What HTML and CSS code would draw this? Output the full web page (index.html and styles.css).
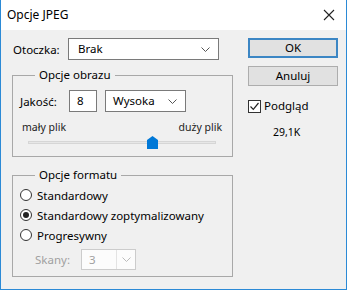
FILE: index.html
```html
<!DOCTYPE html>
<html lang="pl">
<head>
    <meta charset="UTF-8">
    <title>Opcje JPEG</title>
    <link rel="stylesheet" href="styles.css">
</head>
<body>
    <div class="window">
        <div class="titlebar">
            <span class="title">Opcje JPEG</span>
            <svg class="close" width="12" height="12" viewBox="0 0 12 12">
                <path d="M1 1 L11 11 M11 1 L1 11" stroke="#222" stroke-width="1.1" fill="none"/>
            </svg>
        </div>

        <div class="content">
            <div class="main">
                <div class="matte-row">
                    <span class="matte-label">Otoczka:</span>
                    <div class="select select-matte">
                        <span>Brak</span>
                        <svg class="chevron" width="9" height="5" viewBox="0 0 9 5"><path d="M0.5 0.5 L4.5 4.5 L8.5 0.5" stroke="#555" fill="none"/></svg>
                    </div>
                </div>

                <fieldset class="group group-image">
                    <legend>Opcje obrazu</legend>
                    <div class="quality-row">
                        <span class="quality-label">Jakość:</span>
                        <div class="field">8</div>
                        <div class="select select-quality">
                            <span>Wysoka</span>
                            <svg class="chevron" width="9" height="5" viewBox="0 0 9 5"><path d="M0.5 0.5 L4.5 4.5 L8.5 0.5" stroke="#555" fill="none"/></svg>
                        </div>
                    </div>
                    <div class="scale-labels">
                        <span>mały plik</span>
                        <span>duży plik</span>
                    </div>
                    <div class="slider">
                        <div class="track"></div>
                        <svg class="thumb" width="11" height="13" viewBox="0 0 11 13"><path d="M0 4 L5.5 0 L11 4 L11 13 L0 13 Z" fill="#0078d7"/></svg>
                    </div>
                </fieldset>

                <fieldset class="group group-format">
                    <legend>Opcje formatu</legend>
                    <div class="radio"><span class="dot"></span>Standardowy</div>
                    <div class="radio checked"><span class="dot"></span>Standardowy zoptymalizowany</div>
                    <div class="radio"><span class="dot"></span>Progresywny</div>
                    <div class="scans">
                        <span class="scans-label">Skany:</span>
                        <div class="select select-scans">
                            <span>3</span>
                            <span class="drop">
                                <svg class="chevron" width="9" height="5" viewBox="0 0 9 5"><path d="M0.5 0.5 L4.5 4.5 L8.5 0.5" stroke="#bbb" fill="none"/></svg>
                            </span>
                        </div>
                    </div>
                </fieldset>
            </div>

            <div class="side">
                <div class="btn btn-default">OK</div>
                <div class="btn">Anuluj</div>
                <div class="check">
                    <span class="box">
                        <svg width="11" height="11" viewBox="0 0 11 11"><path d="M1.5 5.5 L4.3 8.3 L9.5 2" stroke="#222" stroke-width="1.2" fill="none"/></svg>
                    </span>
                    Podgląd
                </div>
                <div class="size">29,1K</div>
            </div>
        </div>
    </div>
</body>
</html>
```

FILE: styles.css
```css
* {
    margin: 0;
    padding: 0;
    box-sizing: border-box;
}

body {
    font-family: "Segoe UI", "Noto Sans", sans-serif;
    font-size: 11.5px;
    color: #000;
    background: #f0f0f0;
}

.window {
    width: 347px;
    height: 290px;
    background: #f0f0f0;
    border: 1px solid #2b8ad6;
    border-top: none;
    display: flex;
    flex-direction: column;
}

.titlebar {
    height: 30px;
    background: #fff;
    display: flex;
    align-items: center;
    justify-content: space-between;
    padding: 0 11px 0 6px;
}

.title {
    font-size: 12px;
    line-height: 14px;
}

.content {
    display: flex;
    padding: 8px 0 0 11px;
}

.main {
    width: 221px;
}

/* combo boxes */
.select {
    height: 22px;
    background: #fff;
    border: 1px solid #7a7a7a;
    display: flex;
    align-items: center;
    justify-content: space-between;
    padding: 0 8px 0 9px;
    line-height: 14px;
}

.chevron {
    display: block;
}

.matte-row {
    display: flex;
    align-items: center;
    height: 22px;
}

.matte-label {
    width: 56px;
    padding-left: 1px;
}

.select-matte {
    width: 151px;
}

/* group boxes */
.group {
    border: 1px solid #a8a8a8;
    margin: 8px 0 0 0;
    padding: 0 10px 7px 7px;
    min-width: 0;
}

.group legend {
    margin-left: 15px;
    padding: 0 4px;
    line-height: 14px;
}

.quality-row {
    display: flex;
    align-items: center;
    margin-top: 8px;
}

.quality-label {
    width: 49px;
}

.field {
    width: 28px;
    height: 22px;
    background: #fff;
    border: 1px solid #7a7a7a;
    padding-left: 7px;
    line-height: 20px;
    margin-right: 8px;
}

.select-quality {
    width: 81px;
    padding-left: 7px;
}

.scale-labels {
    display: flex;
    justify-content: space-between;
    margin: 8px 0 0 2px;
    font-size: 10.5px;
    line-height: 14px;
    color: #222;
}

.slider {
    position: relative;
    height: 13px;
    margin: 2px 0 0 8px;
    width: 188px;
    display: flex;
    align-items: center;
}

.track {
    width: 100%;
    height: 3px;
    background: #e7e7e7;
    border: 1px solid #d6d6d6;
}

.thumb {
    position: absolute;
    left: 119px;
    top: 0;
}

/* format options */
.group-format {
    margin-top: 11px;
    padding-bottom: 6px;
}

.group-format legend {
    margin-bottom: 3px;
}

.radio {
    display: flex;
    align-items: center;
    height: 20px;
    gap: 5px;
}

.dot {
    width: 12px;
    height: 12px;
    border: 1px solid #333;
    border-radius: 50%;
    background: #fff;
    display: flex;
    align-items: center;
    justify-content: center;
}

.radio.checked .dot::after {
    content: "";
    width: 6px;
    height: 6px;
    border-radius: 50%;
    background: #222;
}

.scans {
    display: flex;
    align-items: center;
    margin-top: 4px;
    color: #a0a0a0;
}

.scans-label {
    margin-left: 15px;
    width: 46px;
}

.select-scans {
    width: 55px;
    height: 21px;
    border-color: #ccc;
    background: #fcfcfc;
    padding: 0 0 0 7px;
    color: #a0a0a0;
}

.select-scans .drop {
    width: 19px;
    height: 19px;
    border-left: 1px solid #e3e3e3;
    display: flex;
    align-items: center;
    justify-content: center;
}

/* right column */
.side {
    width: 90px;
    margin-left: 15px;
    display: flex;
    flex-direction: column;
}

.btn {
    height: 20px;
    background: #e1e1e1;
    border: 1px solid #adadad;
    text-align: center;
    line-height: 18px;
    margin-bottom: 8px;
}

.btn-default {
    border: 2px solid #3c86c4;
    line-height: 16px;
}

.check {
    display: flex;
    align-items: center;
    gap: 3px;
    margin-top: 5px;
    line-height: 14px;
}

.box {
    width: 13px;
    height: 13px;
    border: 1px solid #333;
    background: #fff;
    display: flex;
    align-items: center;
    justify-content: center;
}

.size {
    margin: 12px 0 0 25px;
    font-size: 10.5px;
    line-height: 14px;
}
```
